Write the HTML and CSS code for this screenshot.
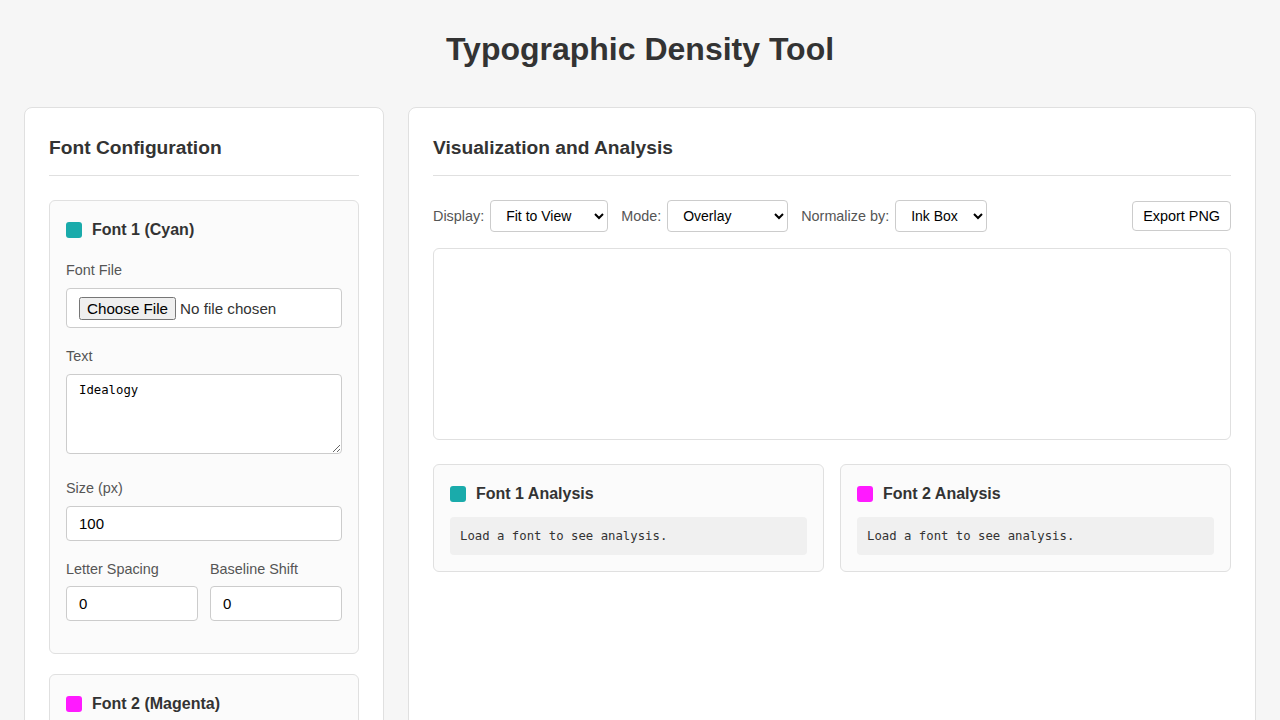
FILE: index.html
```html
<!DOCTYPE html>
<html lang="en">
<head>
<meta charset="utf-8">
<title>Typographic Density Tool</title>
<link rel="stylesheet" href="styles.css">
</head>
<body>
<h1 class="title">Typographic Density Tool</h1>
<div class="layout">
  <section class="panel panel-left">
    <h2 class="panel-title">Font Configuration</h2>
    <div class="font-card">
      <div class="card-head"><span class="swatch swatch-cyan"></span>Font 1 (Cyan)</div>
      <div class="group">
        <label class="lbl">Font File</label>
        <div class="file-box"><input type="file" class="file-input"></div>
      </div>
      <div class="group group-text">
        <label class="lbl">Text</label>
        <textarea class="text-area">Idealogy</textarea>
      </div>
      <div class="group">
        <label class="lbl">Size (px)</label>
        <input type="number" class="num" value="100">
      </div>
      <div class="group row2">
        <div>
          <label class="lbl">Letter Spacing</label>
          <input type="number" class="num" value="0">
        </div>
        <div>
          <label class="lbl">Baseline Shift</label>
          <input type="number" class="num" value="0">
        </div>
      </div>
    </div>
    <div class="font-card">
      <div class="card-head"><span class="swatch swatch-magenta"></span>Font 2 (Magenta)</div>
      <div class="group">
        <label class="lbl">Font File</label>
        <div class="file-box"><input type="file" class="file-input"></div>
      </div>
    </div>
  </section>
  <section class="panel panel-right">
    <h2 class="panel-title">Visualization and Analysis</h2>
    <div class="controls">
      <label class="ctl-lbl">Display:</label>
      <select class="sel sel-display"><option>Fit to View</option></select>
      <label class="ctl-lbl">Mode:</label>
      <select class="sel sel-mode"><option>Overlay</option></select>
      <label class="ctl-lbl">Normalize by:</label>
      <select class="sel sel-norm"><option>Ink Box</option></select>
      <button class="export">Export PNG</button>
    </div>
    <div class="canvas-box"></div>
    <div class="analysis">
      <div class="a-card">
        <div class="a-head"><span class="swatch swatch-cyan"></span>Font 1 Analysis</div>
        <pre class="a-pre">Load a font to see analysis.</pre>
      </div>
      <div class="a-card">
        <div class="a-head"><span class="swatch swatch-magenta"></span>Font 2 Analysis</div>
        <pre class="a-pre">Load a font to see analysis.</pre>
      </div>
    </div>
  </section>
</div>
</body>
</html>
```
FILE: styles.css
```css
* { box-sizing: border-box; }
html, body { margin: 0; }
body {
  background: #f6f6f6;
  color: #333;
  font-family: "Liberation Sans", Arial, sans-serif;
  padding: 0 24px;
  height: 720px;
  overflow: hidden;
}
.title {
  margin: 0;
  padding: 31px 0 39px;
  line-height: 37px;
  font-size: 32px;
  font-weight: bold;
  text-align: center;
  color: #333;
}
.layout {
  display: flex;
  gap: 24px;
  align-items: flex-start;
}
.panel {
  background: #fff;
  border: 1px solid #e0e0e0;
  border-radius: 8px;
  padding: 24px;
}
.panel-left { width: 360px; flex: none; min-height: 700px; }
.panel-right { flex: 1; min-height: 700px; }
.panel-title {
  margin: 0 0 24px;
  padding: 4px 0 15px;
  line-height: 24px;
  font-size: 19.2px;
  font-weight: bold;
  border-bottom: 1px solid #e0e0e0;
}
.font-card {
  background: #fbfbfb;
  border: 1px solid #e0e0e0;
  border-radius: 6px;
  padding: 17px 16px 0;
  margin-bottom: 20px;
}
.card-head, .a-head {
  display: flex;
  align-items: center;
  gap: 10px;
  font-size: 16px;
  font-weight: bold;
  line-height: 24px;
}
.card-head { margin-bottom: 18px; }
.a-head { line-height: 26px; }
.swatch {
  width: 16px;
  height: 16px;
  border-radius: 3px;
  display: inline-block;
}
.swatch-cyan { background: #1aabab; }
.swatch-magenta { background: #ff1aff; }
.group { margin-bottom: 18px; }
.group-text { margin-bottom: 24px; }
.lbl {
  display: block;
  font-size: 14.4px;
  line-height: 20px;
  color: #555;
  margin-bottom: 8px;
}
.row2 .lbl { margin-bottom: 7px; }
.file-box {
  height: 40px;
  border: 1px solid #ccc;
  border-radius: 4px;
  background: #fff;
  padding: 0 12px;
  display: flex;
  align-items: center;
}
.file-input {
  font-family: "Liberation Sans", Arial, sans-serif;
  font-size: 15.2px;
}
.text-area {
  display: block;
  width: 100%;
  height: 80px;
  border: 1px solid #ccc;
  border-radius: 4px;
  background: #fff;
  padding: 8px 12px;
  font-family: "DejaVu Sans Mono", monospace;
  font-size: 12.3px;
  color: #000;
}
.num {
  display: block;
  width: 100%;
  height: 35px;
  border: 1px solid #ccc;
  border-radius: 4px;
  background: #fff;
  padding: 0 12px;
  font-family: "Liberation Sans", Arial, sans-serif;
  font-size: 15px;
  color: #000;
}
.num::-webkit-inner-spin-button { display: none; }
.row2 {
  display: grid;
  grid-template-columns: 1fr 1fr;
  gap: 12px;
  margin-bottom: 32px;
}
.controls {
  display: flex;
  align-items: center;
  height: 32px;
}
.ctl-lbl {
  font-size: 14.4px;
  color: #555;
  margin-right: 6px;
}
.sel {
  height: 32px;
  border: 1px solid #ccc;
  border-radius: 4px;
  background: #fff;
  font-family: "Liberation Sans", Arial, sans-serif;
  font-size: 14px;
  color: #000;
  padding: 0 8px 0 11px;
  margin-right: 13px;
}
.sel-display { width: 118px; }
.sel-mode { width: 121px; }
.sel-norm { width: 92px; }
.export {
  margin-left: auto;
  height: 30px;
  padding: 0 10px;
  border: 1px solid #ccc;
  border-radius: 4px;
  background: #fff;
  font-family: "Liberation Sans", Arial, sans-serif;
  font-size: 14.4px;
  color: #000;
}
.canvas-box {
  margin-top: 16px;
  height: 192px;
  border: 1px solid #e0e0e0;
  border-radius: 6px;
  background: #fff;
}
.analysis {
  margin-top: 24px;
  display: grid;
  grid-template-columns: 1fr 1fr;
  gap: 16px;
}
.a-card {
  background: #fbfbfb;
  border: 1px solid #e0e0e0;
  border-radius: 6px;
  padding: 16px;
}
.a-pre {
  margin: 10px 0 0;
  background: #f0f0f0;
  border-radius: 4px;
  padding: 10px;
  font-family: "DejaVu Sans Mono", monospace;
  font-size: 12.3px;
  line-height: 18px;
  color: #333;
}
```
